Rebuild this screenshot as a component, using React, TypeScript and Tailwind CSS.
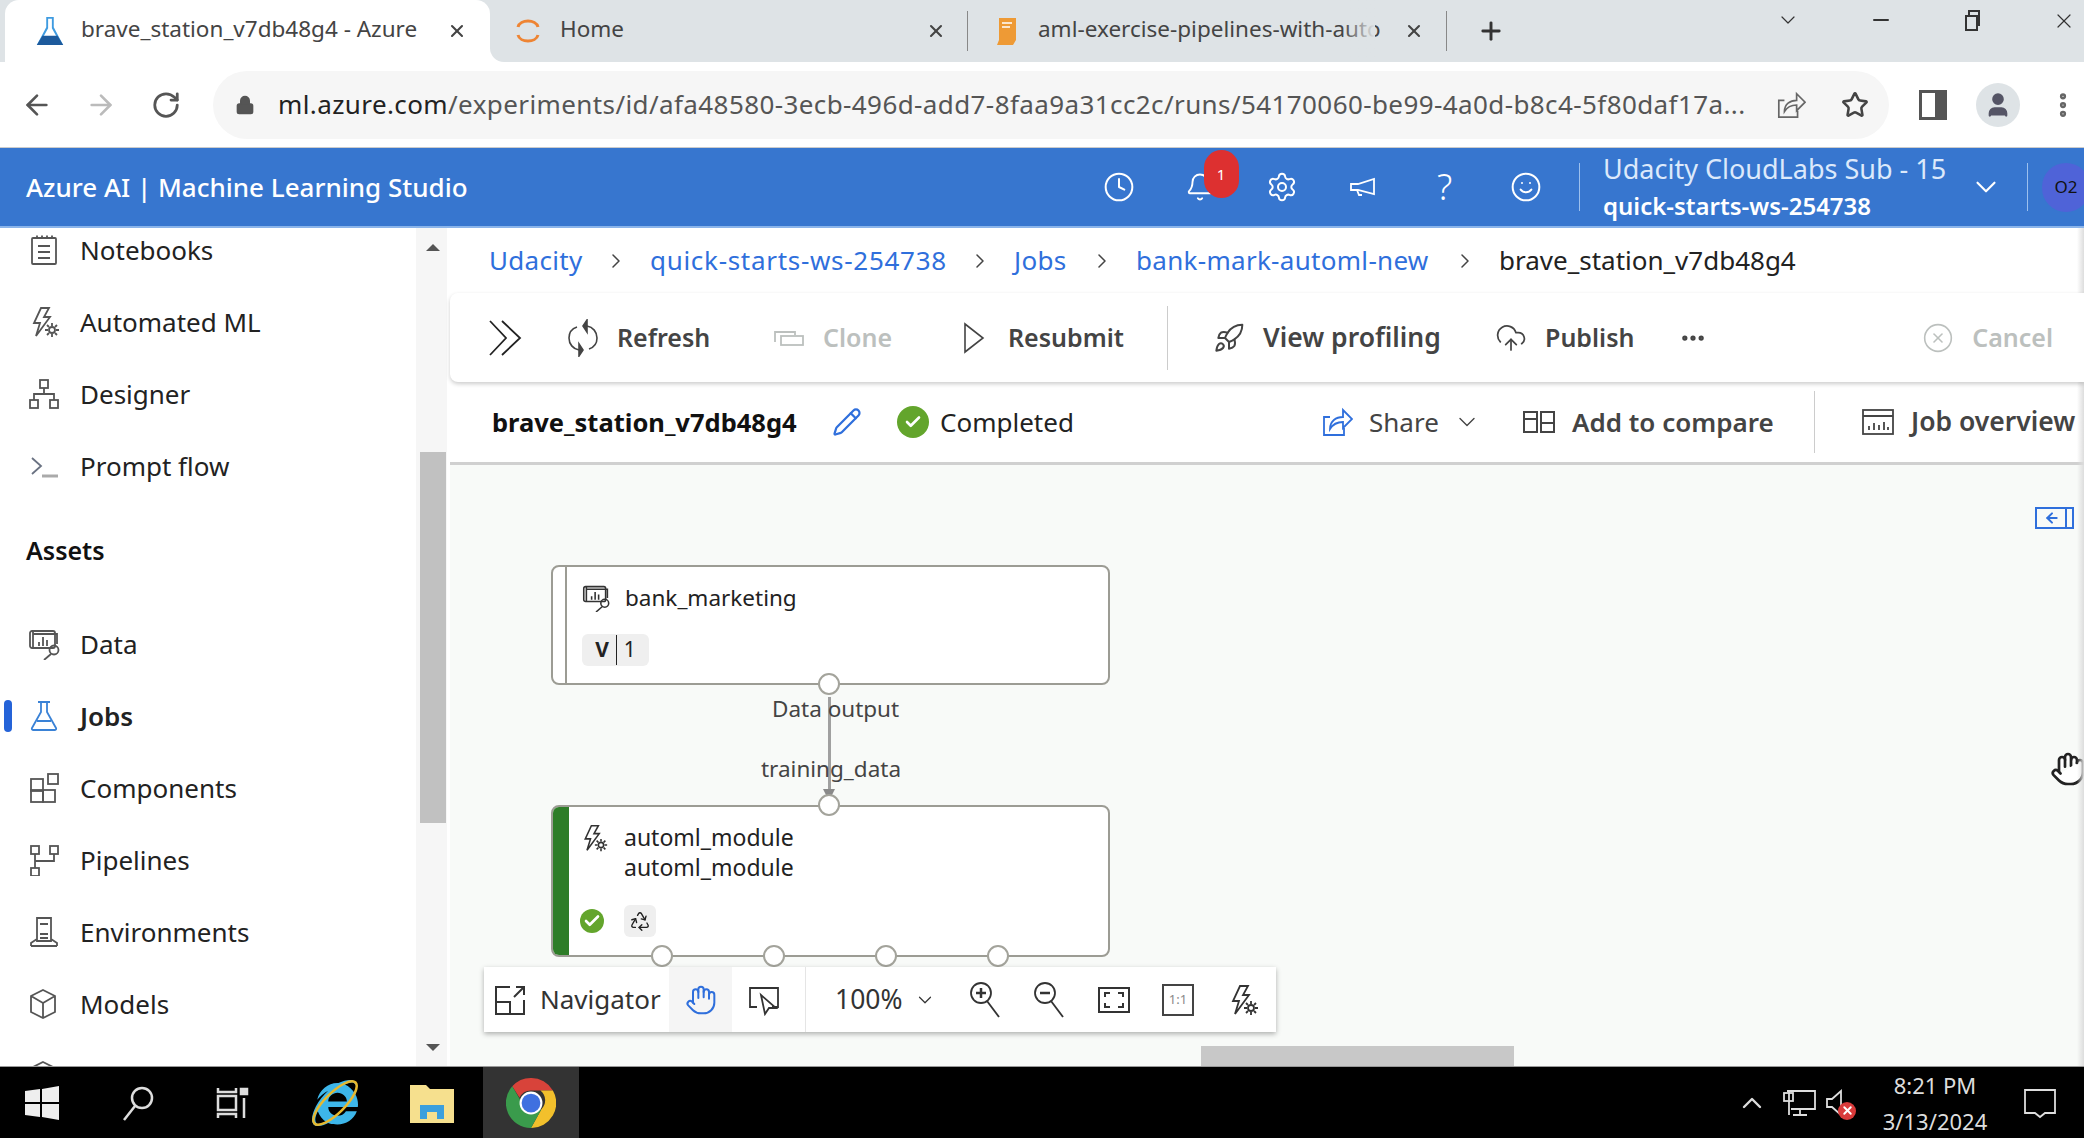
import type { ReactNode } from "react";
import {
  ArrowLeft,
  ArrowRight,
  Bell,
  ChevronDown,
  ChevronRight,
  ChevronUp,
  Clock,
  CloudUpload,
  Ellipsis,
  Hand,
  Lock,
  Minus,
  Pencil,
  Plus,
  Rocket,
  RotateCw,
  Settings,
  Smile,
  Star,
  User,
  X,
  Recycle,
  CircleX,
  Check,
} from "lucide-react";
import { FaInternetExplorer } from "react-icons/fa";

function Ico({ children, className = "w-8 h-8" }: { children: ReactNode; className?: string }) {
  return (
    <svg viewBox="0 0 32 32" fill="none" stroke="currentColor" strokeWidth="1.8" className={className}>
      {children}
    </svg>
  );
}

const NotebookIcon = () => (
  <Ico>
    <rect x="4" y="4" width="24" height="26" rx="1" />
    <path d="M9 1.5v3M14 1.5v3M19 1.5v3M24 1.5v3M10 12h12M10 18h12M10 24h12" />
  </Ico>
);
const BoltGear = ({ className }: { className?: string }) => (
  <Ico className={className}>
    <path d="M13 2h8l-5 9h6L8 30l4-13H6z" />
    <circle cx="24" cy="24" r="3" />
    <path d="M24 17v3M24 28v3M17 24h3M28 24h3M19 19l2 2M27 27l2 2M29 19l-2 2M21 27l-2 2" />
  </Ico>
);
const DesignerIcon = () => (
  <Ico>
    <rect x="12" y="2" width="8" height="8" />
    <rect x="2" y="22" width="8" height="8" />
    <rect x="22" y="22" width="8" height="8" />
    <path d="M16 10v6M6 22v-6h20v6" />
  </Ico>
);
const PromptIcon = () => (
  <Ico>
    <path d="M4 8l9 8-9 8" className="text-gray-500" />
    <path d="M14 26h16" strokeWidth="3" stroke="#aaa" />
  </Ico>
);
const DataIcon = ({ className }: { className?: string }) => (
  <Ico className={className}>
    <rect x="2" y="3" width="25" height="17" rx="2" />
    <path d="M5 6h24v10M5 3v17" />
    <path d="M11 18v-4M15 18V9M19 18v-6" />
    <circle cx="26" cy="22" r="4.5" />
    <path d="M23 26l-7 6" />
  </Ico>
);
const FlaskIcon = ({ className }: { className?: string }) => (
  <Ico className={className}>
    <path d="M10 2h12M13 2v10L4 28c-.5 1 0 2 1 2h22c1 0 1.500-1 1-2L19 12V2M9 21h14" />
  </Ico>
);
const ComponentsIcon = () => (
  <Ico>
    <rect x="3" y="7" width="12" height="12" />
    <rect x="15" y="19" width="12" height="12" transform="translate(0 -1)" />
    <rect x="3" y="18" width="12" height="12" />
    <rect x="20" y="2" width="10" height="10" />
  </Ico>
);
const PipelinesIcon = () => (
  <Ico>
    <rect x="3" y="2" width="8" height="8" />
    <rect x="22" y="2" width="8" height="8" />
    <rect x="3" y="24" width="8" height="8" />
    <path d="M7 10v14M7 17h19v-7" />
  </Ico>
);
const EnvIcon = () => (
  <Ico>
    <path d="M9 2h14v23H9zM3 30v-3l6-4M29 30v-3l-6-4M3 30h26M12 18h8M12 22h8M12 8h8" />
  </Ico>
);
const ModelIcon = () => (
  <Ico>
    <path d="M15 2l12 6v16l-12 6-12-6V8zM3 8l12 7 12-7M15 15v15" />
  </Ico>
);
const ShareBoxIcon = ({ className }: { className?: string }) => (
  <svg viewBox="0 0 32 32" fill="none" stroke="currentColor" strokeWidth="1.8" className={className}>
    <path d="M9 11H3v18h20v-7" />
    <path d="M9 23c0-8 6-12 13-12V4l9 9-9 9v-6c-6 0-10 2-13 7z" />
  </svg>
);
const MagnifierIcon = ({ minus }: { minus?: boolean }) => (
  <svg viewBox="0 0 32 38" fill="none" stroke="currentColor" strokeWidth="1.800" className="h-[38px] w-8">
    <circle cx="12" cy="12" r="10" />
    <path d={minus ? "M7 12h10" : "M7 12h10M12 7v10"} strokeWidth="2.500" />
    <path d="M18 20l12 16" />
  </svg>
);

function NavItem({ icon, label, active }: { icon: ReactNode; label: string; active?: boolean }) {
  return (
    <div className="relative flex h-[72px] shrink-0 items-center">
      {active && <div className="absolute left-1 top-[20px] h-8 w-2 rounded bg-[#2563d8]" />}
      <div className={`ml-[28px] flex w-8 justify-center ${active ? "text-[#3a82d6]" : "text-[#555]"}`}>{icon}</div>
      <span className={`ml-[20px] text-[26px] text-[#222] ${active ? "font-semibold" : ""}`}>{label}</span>
    </div>
  );
}

function Sidebar() {
  return (
    <div className="relative h-full w-[450px] shrink-0 overflow-hidden bg-white">
      <div className="-mt-[14px] flex w-[416px] flex-col">
        <NavItem icon={<NotebookIcon />} label="Notebooks" />
        <NavItem icon={<BoltGear />} label="Automated ML" />
        <NavItem icon={<DesignerIcon />} label="Designer" />
        <NavItem icon={<PromptIcon />} label="Prompt flow" />
        <div className="mt-[13px] mb-[21px] flex h-[72px] items-center pl-[26px] text-[25px] font-semibold text-[#111]">Assets</div>
        <NavItem icon={<DataIcon />} label="Data" />
        <NavItem icon={<FlaskIcon />} label="Jobs" active />
        <NavItem icon={<ComponentsIcon />} label="Components" />
        <NavItem icon={<PipelinesIcon />} label="Pipelines" />
        <NavItem icon={<EnvIcon />} label="Environments" />
        <NavItem icon={<ModelIcon />} label="Models" />
        <NavItem icon={<ModelIcon />} label="" />
      </div>
      {/* scrollbar */}
      <div className="absolute bottom-0 left-[416px] top-0 w-[31px] bg-[#f6f6f6]">
        <div className="absolute left-[10px] top-[16px] h-0 w-0 border-x-[7px] border-b-[7px] border-x-transparent border-b-[#555]" />
        <div className="absolute left-[4px] top-[224px] h-[371px] w-[26px] bg-[#c1c1c1]" />
        <div className="absolute bottom-[15px] left-[10px] h-0 w-0 border-x-[7px] border-t-[7px] border-x-transparent border-t-[#555]" />
      </div>
    </div>
  );
}

function FlaskFav() {
  return (
    <svg viewBox="0 0 30 34" className="h-8 w-[30px] shrink-0">
      <path d="M11 2h8v11l10 19H1l10-19z" fill="#3f9be0" />
      <path d="M13 4h4v10l5 9H8l5-9z" fill="#fff" />
      <path d="M7 22h16l6 10H1z" fill="#1d5a9c" />
    </svg>
  );
}

function TabBar() {
  return (
    <div className="flex h-[62px] shrink-0 items-center bg-[#dee3e6] text-[22.500px] text-[#444]">
      <div className="relative ml-[5px] flex h-full w-[485px] shrink-0 items-center rounded-t-[14px] bg-white pl-[30px]">
        <FlaskFav />
        <span className="ml-4 -mt-[4px] w-[340px] shrink-0 whitespace-nowrap">brave_station_v7db48g4 - Azure</span>
        <X size={20} strokeWidth={2.5} className="ml-[26px] shrink-0" />
        <div className="absolute -right-[14px] bottom-0 h-[14px] w-[14px] bg-white">
          <div className="h-full w-full rounded-bl-[14px] bg-[#dee3e6]" />
        </div>
      </div>
      <div className="flex h-full w-[477px] shrink-0 items-center pl-[24px]">
        <svg viewBox="0 0 28 32" className="h-8 w-7" fill="none" stroke="#ee8433" strokeWidth="3">
          <path d="M4 12C6 4 22 4 24 12" />
          <path d="M4 20C6 28 22 28 24 20" />
        </svg>
        <span className="ml-[18px] -mt-[4px] flex-1">Home</span>
        <X size={20} strokeWidth={2.5} className="mr-[21px]" />
      </div>
      <div className="h-[40px] w-px shrink-0 bg-[#888]" />
      <div className="relative flex h-full w-[478px] shrink-0 items-center pl-[24px]">
        <svg viewBox="0 0 28 32" className="h-8 w-7 shrink-0">
          <path d="M7 3h17v22l-3 5H5l2-5z" fill="#ee9a35" />
          <path d="M10 8h10M10 12h8" stroke="#fff" strokeWidth="1.500" />
        </svg>
        <span className="ml-[18px] -mt-[4px] w-[350px] shrink-0 whitespace-nowrap">aml-exercise-pipelines-with-auto</span>
        <div className="absolute left-[375px] top-0 h-full w-[32px] bg-gradient-to-r from-[#dee3e6]/0 to-[#dee3e6]" />
        <X size={20} strokeWidth={2.5} className="ml-[16px] shrink-0" />
      </div>
      <div className="h-[40px] w-px shrink-0 bg-[#888]" />
      <Plus size={28} strokeWidth={2.5} className="ml-[30px] text-[#333]" />
      <div className="ml-auto flex h-full items-start pt-[8px] text-[#333]">
        <div className="mr-[69px] flex w-6 justify-center"><ChevronDown size={24} strokeWidth={1.2} /></div>
        <div className="mr-[67px] flex w-6 justify-center"><Minus size={24} strokeWidth={2} /></div>
        <div className="mr-[68px] flex w-6 justify-center">
          <svg viewBox="0 0 24 24" className="h-6 w-6" fill="none" stroke="currentColor" strokeWidth="2">
            <rect x="6" y="8" width="11" height="14" />
            <path d="M9 8V3h10v14h-2" />
          </svg>
        </div>
        <div className="mr-[8px] flex w-6 justify-center"><X size={26} strokeWidth={1.2} /></div>
      </div>
    </div>
  );
}

function AddressBar() {
  return (
    <div className="flex h-[86px] shrink-0 items-center border-b border-[#ccc] bg-white">
      <div className="ml-[5px] flex w-[64px] justify-center"><ArrowLeft size={32} strokeWidth={2} className="text-[#555]" /></div>
      <div className="flex w-[64px] justify-center"><ArrowRight size={32} strokeWidth={2} className="text-[#bbb]" /></div>
      <div className="flex w-[66px] justify-center"><RotateCw size={30} strokeWidth={2.2} className="text-[#555]" /></div>
      <div className="ml-[14px] flex h-[68px] w-[1676px] shrink-0 items-center rounded-full bg-[#f6f6f6] pl-[22px]">
        <Lock size={20} fill="#555" className="shrink-0 text-[#555]" />
        <span className="ml-[23px] w-[1475px] shrink-0 overflow-hidden whitespace-nowrap text-[26px] tracking-[0.4px] text-[#555]">
          <span className="text-[#222]">ml.azure.com</span>/experiments/id/afa48580-3ecb-496d-add7-8faa9a31cc2c/runs/54170060-be99-4a0d-b8c4-5f80daf17a...
        </span>
        <ShareBoxIcon className="ml-[23px] h-[30px] w-[30px] shrink-0 text-[#666]" />
        <Star size={28} strokeWidth={2.2} className="ml-[35px] shrink-0 text-[#444]" />
      </div>
      <div className="ml-[28px] flex w-[32px] justify-center">
        <div className="h-[30px] w-[28px] border-[3px] border-r-[12px] border-[#555]" />
      </div>
      <div className="ml-[27px] flex h-[44px] w-[44px] items-center justify-center rounded-full bg-[#dee3e6]">
        <User size={28} fill="#556" className="text-[#556]" />
      </div>
      <div className="ml-[23px] flex w-[40px] justify-center"><Ellipsis size={30} strokeWidth={3} className="rotate-90 text-[#666]" /></div>
    </div>
  );
}

function AzureHeader() {
  const iconBox = "flex w-[81.5px] shrink-0 justify-center";
  return (
    <div className="relative flex h-[80px] shrink-0 items-center border-b-2 border-[#8ab4ea] bg-[#3776cf] text-white">
      <div className="min-w-0 flex-1 whitespace-nowrap pl-[26px] text-[26px] font-medium">Azure AI | Machine Learning Studio</div>
      <div className={iconBox}><Clock size={32} strokeWidth={1.5} /></div>
      <div className={`${iconBox} relative`}>
        <Bell size={30} strokeWidth={1.5} />
        <div className="absolute left-[44px] -top-[22px] flex h-[48px] w-[35px] items-center justify-center rounded-full bg-[#dd3030] text-[15px]">1</div>
      </div>
      <div className={iconBox}><Settings size={32} strokeWidth={1.5} /></div>
      <div className={iconBox}>
        <svg viewBox="0 0 32 32" className="h-8 w-8" fill="none" stroke="currentColor" strokeWidth="1.800">
          <path d="M4 13h7l16-5v15l-16-4H4zM10 19l2 5h3" />
        </svg>
      </div>
      <div className={`${iconBox} text-[36px] font-light leading-none`}>?</div>
      <div className={iconBox}><Smile size={32} strokeWidth={1.5} /></div>
      <div className="ml-3 h-[48px] w-px shrink-0 bg-[#9cc0ee]" />
      <div className="ml-[23px] flex w-[360px] shrink-0 flex-col">
        <span className="whitespace-nowrap text-[27px] leading-[38px] text-[#dce9fb]">Udacity CloudLabs Sub - 15</span>
        <span className="whitespace-nowrap text-[24px] font-semibold leading-[36px]">quick-starts-ws-254738</span>
      </div>
      <div className="flex w-[46px] shrink-0 justify-center"><ChevronDown size={34} strokeWidth={1.5} /></div>
      <div className="ml-[18px] h-[48px] w-px shrink-0 bg-[#9cc0ee]" />
      <div className="ml-[14px] -mr-[6px] flex h-[49px] w-[48px] shrink-0 items-center justify-center rounded-full bg-[#4f63d8] text-[17px] text-[#111]">O2</div>
    </div>
  );
}

function Breadcrumb() {
  const crumbs = [
    { label: "Udacity", width: "w-[93px]" },
    { label: "quick-starts-ws-254738", width: "w-[296px] tracking-[0.7px]" },
    { label: "Jobs", width: "w-[54px]" },
    { label: "bank-mark-automl-new", width: "w-[295px]" },
  ];
  return (
    <div className="flex h-[65px] shrink-0 items-center bg-white pl-[39px] text-[26px] tracking-[0.3px]">
      {crumbs.map((c) => (
        <div key={c.label} className="flex items-center">
          <span className={`whitespace-nowrap text-[#2f6fdc] ${c.width}`}>{c.label}</span>
          <div className="flex w-[68px] justify-center"><ChevronRight size={24} strokeWidth={1.5} className="text-[#444]" /></div>
        </div>
      ))}
      <span className="whitespace-nowrap tracking-normal text-[#222]">brave_station_v7db48g4</span>
    </div>
  );
}

function ToolBtn({ icon, label, width, disabled, text = "text-[25px]" }: { icon: ReactNode; label: string; width: string; disabled?: boolean; text?: string }) {
  return (
    <div className={`flex shrink-0 items-center ${width} ${disabled ? "text-[#bcc0be]" : "text-[#444]"}`}>
      <div className="flex w-[34px] shrink-0 justify-center">{icon}</div>
      <span className={`ml-[17px] whitespace-nowrap font-semibold ${text}`}>{label}</span>
    </div>
  );
}

function Toolbar() {
  return (
    <div className="z-10 flex h-[89px] shrink-0 items-center rounded-l-lg bg-white pl-[38px] pr-[31px] shadow-[0_2px_4px_rgba(0,0,0,0.2)]">
      <div className="mr-[44px] flex w-[34px] justify-center text-[#222]">
        <svg viewBox="0 0 34 38" className="h-[38px] w-[34px]" fill="none" stroke="currentColor" strokeWidth="1.800">
          <path d="M2 2l16 17L2 36M14 2l18 17-18 17" />
        </svg>
      </div>
      <ToolBtn width="w-[206px]" label="Refresh" icon={
        <svg viewBox="0 0 32 38" className="h-[38px] w-8" fill="none" stroke="currentColor" strokeWidth="1.600">
          <path d="M10 8C4 10 2 15 2 19c0 6 4 11 10 12M22 30c6-2 8-7 8-11 0-6-4-11-10-12" />
          <path d="M20 1v12l-4-6zM12 25v12l4-6z" fill="currentColor" />
        </svg>
      } />
      <ToolBtn width="w-[185px]" label="Clone" disabled icon={
        <svg viewBox="0 0 32 32" className="h-8 w-8" fill="none" stroke="currentColor" strokeWidth="1.800"><path d="M2 20V10h20v3" /><rect x="8" y="14" width="22" height="9" /></svg>
      } />
      <ToolBtn width="w-[210px]" label="Resubmit" icon={
        <svg viewBox="0 0 24 32" className="h-8 w-6" fill="none" stroke="currentColor" strokeWidth="1.600"><path d="M3 2l18 14L3 30z" /></svg>
      } />
      <div className="h-[64px] w-px shrink-0 bg-[#ccc]" />
      <div className="ml-[44px]"><ToolBtn width="w-[282px]" label="View profiling" text="text-[26.500px]" icon={<Rocket size={32} strokeWidth={1.5} />} /></div>
      <ToolBtn width="w-[182px]" label="Publish" icon={<CloudUpload size={32} strokeWidth={1.3} />} />
      <div className="flex w-[34px] justify-center text-[#444]"><Ellipsis size={28} strokeWidth={2.500} /></div>
      <div className="ml-auto flex items-center text-[#bcc0be]">
        <CircleX size={32} strokeWidth={1.2} />
        <span className="ml-[18px] text-[25px] font-semibold">Cancel</span>
      </div>
    </div>
  );
}

function CheckBadge({ size }: { size: string }) {
  return (
    <div className={`flex shrink-0 items-center justify-center rounded-full bg-[#63a52c] text-white ${size}`}>
      <Check size={18} strokeWidth={3.5} />
    </div>
  );
}

function JobRow() {
  return (
    <div className="flex h-[83px] shrink-0 items-center border-b-[3px] border-[#d0d0d0] bg-white pl-[42px]">
      <div className="w-[340px] shrink-0 whitespace-nowrap text-[25.500px] font-bold text-[#111]">brave_station_v7db48g4</div>
      <Pencil size={30} strokeWidth={1.800} className="shrink-0 text-[#2f6fdc]" />
      <div className="ml-[35px]"><CheckBadge size="h-8 w-8" /></div>
      <span className="ml-[11px] whitespace-nowrap text-[26px] text-[#222]">Completed</span>
      <div className="ml-auto flex shrink-0 items-center text-[#444]">
        <div className="flex w-[202px] shrink-0 items-center">
          <ShareBoxIcon className="h-8 w-8 text-[#2f6fdc]" />
          <span className="ml-4 text-[26px]">Share</span>
          <ChevronDown size={28} strokeWidth={1.2} className="ml-[14px]" />
        </div>
        <div className="flex w-[291px] shrink-0 items-center">
          <svg viewBox="0 0 32 24" className="h-6 w-8" fill="none" stroke="currentColor" strokeWidth="2"><rect x="1" y="2" width="13" height="20" /><rect x="18" y="2" width="13" height="20" /><path d="M1 9h13M18 13h13" /></svg>
          <span className="ml-[17px] whitespace-nowrap text-[26px] font-semibold">Add to compare</span>
        </div>
        <div className="h-[62px] w-px shrink-0 bg-[#ccc]" />
        <div className="ml-[47px] flex w-[222px] shrink-0 items-center">
          <svg viewBox="0 0 32 28" className="h-7 w-8" fill="none" stroke="currentColor" strokeWidth="1.800"><rect x="1" y="2" width="30" height="24" /><path d="M1 8h30M7 22v-4M12 22v-7M17 22v-5M22 22v-8M26 22v-3" /></svg>
          <span className="ml-[17px] whitespace-nowrap text-[26.500px] font-semibold">Job overview</span>
        </div>
      </div>
    </div>
  );
}

function Port({ left, top }: { left: string; top: string }) {
  return <div className={`absolute h-[22px] w-[22px] rounded-full border-2 border-[#a3a39b] bg-white ${left} ${top}`} />;
}

function Canvas() {
  return (
    <div className="relative min-h-0 flex-1 overflow-hidden bg-[#f8faf8] text-[#222]">
      {/* side panel toggle */}
      <div className="absolute left-[1585px] top-[42px] flex h-[22px] w-[39px] items-center border-2 border-[#2f6fdc] text-[#2f6fdc]">
        <ArrowLeft size={16} strokeWidth={3} className="ml-[7px]" />
        <div className="ml-[5px] h-full w-[2px] bg-[#2f6fdc]" />
      </div>
      <Hand size={36} strokeWidth={1.8} fill="#fff" className="absolute left-[1600px] top-[286px] text-[#222]" />

      {/* dataset node */}
      <div className="absolute left-[101px] top-[100px] flex h-[120px] w-[559px] rounded-lg border-2 border-[#9c9c94] bg-white">
        <div className="w-[14px] shrink-0 border-r-2 border-[#9c9c94]" />
        <div className="flex flex-col pl-[15px] pt-[15px]">
          <div className="flex items-center">
            <DataIcon className="h-7 w-7 text-[#333]" />
            <span className="ml-[15px] text-[22.500px] leading-8">bank_marketing</span>
          </div>
          <div className="mt-[20px] flex h-[32px] w-[67px] items-center justify-center rounded-md bg-[#efefef] text-[21px]">
            <span className="font-bold">V</span>
            <span className="mx-[7px] h-[30px] w-px bg-[#222]" />
            <span>1</span>
          </div>
        </div>
      </div>

      {/* connector */}
      <div className="absolute left-[378px] top-[232px] h-[98px] w-[3px] bg-[#a0a0a0]" />
      <div className="absolute left-[373px] top-[324px] h-0 w-0 border-x-[6.500px] border-t-[12px] border-x-transparent border-t-[#8a8a8a]" />
      <Port left="left-[368px]" top="top-[208px]" />
      <span className="absolute left-[322px] top-[229px] whitespace-nowrap text-[22.500px] leading-[30px] text-[#444]">Data output</span>
      <span className="absolute left-[311px] top-[289px] whitespace-nowrap text-[22.500px] leading-[30px] text-[#444]">training_data</span>

      {/* automl node */}
      <div className="absolute left-[101px] top-[340px] flex h-[152px] w-[559px] overflow-hidden rounded-lg border-2 border-[#9c9c94] bg-white">
        <div className="w-[16px] shrink-0 bg-[#2e7d28]" />
        <div className="flex flex-col pl-[11px] pt-[15px]">
          <div className="flex">
            <BoltGear className="h-8 w-7 text-[#333]" />
            <div className="ml-[16px] flex flex-col text-[23px] leading-[30px]">
              <span>automl_module</span>
              <span>automl_module</span>
            </div>
          </div>
          <div className="mt-[23px] flex items-center">
            <CheckBadge size="h-6 w-6" />
            <div className="ml-[20px] flex h-8 w-8 items-center justify-center rounded-md bg-[#efefef]"><Recycle size={22} strokeWidth={1.5} /></div>
          </div>
        </div>
      </div>
      <Port left="left-[368px]" top="top-[329px]" />
      <Port left="left-[201px]" top="top-[480px]" />
      <Port left="left-[313px]" top="top-[480px]" />
      <Port left="left-[425px]" top="top-[480px]" />
      <Port left="left-[537px]" top="top-[480px]" />

      {/* floating controls */}
      <div className="absolute left-[34px] top-[502px] flex h-[65px] w-[792px] items-center bg-white pl-[10px] text-[#333] shadow-[0_2px_5px_rgba(0,0,0,0.3)]">
        <svg viewBox="0 0 32 32" className="h-8 w-8 shrink-0" fill="none" stroke="currentColor" strokeWidth="2"><path d="M16 3H2v27h28V16M2 18h14v12M20 13L30 3M22 3h8v8" /></svg>
        <span className="ml-[14px] w-[129px] shrink-0 text-[26px]">Navigator</span>
        <div className="flex h-full w-[63px] shrink-0 items-center justify-center bg-[#f5f5f5]"><Hand size={32} strokeWidth={1.5} className="text-[#2f6fdc]" /></div>
        <div className="flex w-[73px] shrink-0 justify-start pl-4">
          <svg viewBox="0 0 32 32" className="h-8 w-8" fill="none" stroke="currentColor" strokeWidth="1.800"><path d="M9 23H2V4h28v19h-6M13 11l4 19 4-6 7 0z" /></svg>
        </div>
        <div className="h-full w-px shrink-0 bg-[#e5e5e5]" />
        <span className="ml-[29px] w-[72px] shrink-0 whitespace-nowrap text-[26.500px]">100%</span>
        <ChevronDown size={22} strokeWidth={1.3} className="ml-[7px] shrink-0" />
        <div className="ml-[33px] shrink-0"><MagnifierIcon /></div>
        <div className="ml-[32px] shrink-0"><MagnifierIcon minus /></div>
        <svg viewBox="0 0 32 32" className="ml-[33px] h-8 w-8 shrink-0" fill="none" stroke="currentColor" strokeWidth="2"><rect x="1" y="4" width="30" height="24" /><path d="M7 13V9h5M20 9h5v4M25 19v4h-5M12 23H7v-4" /></svg>
        <div className="ml-[32px] flex h-[32px] w-[32px] shrink-0 items-center justify-center border-2 border-[#444] text-[13px] text-[#888]">1:1</div>
        <div className="ml-[33px] shrink-0"><BoltGear /></div>
      </div>

      {/* horizontal scrollbar */}
      <div className="absolute bottom-0 left-[751px] h-[20px] w-[313px] bg-[#c8c8c8]" />
    </div>
  );
}

function Taskbar() {
  return (
    <div className="flex h-[72px] shrink-0 items-center border-t border-[#999] bg-black text-white">
      <svg viewBox="0 0 34 34" className="ml-[25px] h-[34px] w-[34px]" fill="#eee">
        <path d="M0 5l15-2v13H0zM17 3l17-3v16H17zM0 18h15v13L0 29zM17 18h17v16l-17-3z" />
      </svg>
      <svg viewBox="0 0 34 36" className="ml-[62px] h-9 w-[34px]" fill="none" stroke="#ddd" strokeWidth="2.500">
        <circle cx="21" cy="13" r="10" />
        <path d="M14 21L3 35" />
      </svg>
      <svg viewBox="0 0 34 34" className="ml-[60px] h-[34px] w-[34px]" fill="none" stroke="#ddd" strokeWidth="2.500">
        <path d="M3 2v4h18V2M3 32v-4h18v4M3 10h18v14H3zM29 12v20" />
        <rect x="26" y="3" width="6" height="5" fill="#ddd" />
      </svg>
      <div className="relative ml-[63px] flex h-[46px] w-[46px] items-center justify-center">
        <FaInternetExplorer size={46} className="text-[#3db6ea]" />
        <svg viewBox="0 0 46 46" className="absolute inset-0 h-[46px] w-[46px]" fill="none" stroke="#e8b92e" strokeWidth="2.500">
          <ellipse cx="23" cy="23" rx="29" ry="10" transform="rotate(-45 23 23)" />
        </svg>
      </div>
      <svg viewBox="0 0 44 40" className="ml-[52px] h-[40px] w-[44px]">
        <path d="M0 2h16l4 4h24v34H0z" fill="#f6e08e" />
        <path d="M10 36V22h24v14h-7v-7H17v7z" fill="#3b9fdd" />
      </svg>
      <div className="ml-[29px] flex h-full w-[96px] items-center justify-center bg-[#333]">
        <svg viewBox="0 0 48 48" className="h-[50px] w-[50px]">
          <path d="M24 0a24 24 0 0 1 21 12H24a12 12 0 0 0-11 7L6 8A24 24 0 0 1 24 0z" fill="#d8433a" />
          <path d="M45 12a24 24 0 0 1-21 36l10-18a12 12 0 0 0-1-18z" fill="#f2c02c" />
          <path d="M24 48A24 24 0 0 1 6 8l10 17a12 12 0 0 0 18 5z" fill="#3a9b4c" />
          <circle cx="24" cy="24" r="11" fill="#fff" />
          <circle cx="24" cy="24" r="9" fill="#3f70e0" />
        </svg>
      </div>
      <div className="ml-auto flex items-center">
        <ChevronUp size={32} strokeWidth={1.8} className="text-[#ddd]" />
        <svg viewBox="0 0 34 28" className="ml-[15px] h-[28px] w-[34px]" fill="none" stroke="#ddd" strokeWidth="1.800">
          <path d="M4 2h28v18H8M10 26h14M17 20v6M6 2v24" />
          <rect x="1" y="4" width="9" height="8" />
        </svg>
        <div className="relative ml-[8px] w-[30px]">
          <svg viewBox="0 0 20 28" className="h-[28px] w-[20px]" fill="none" stroke="#ddd" strokeWidth="1.800">
            <path d="M2 10h5l9-8v24l-9-8H2z" />
          </svg>
          <div className="absolute -bottom-[3px] left-[13px] flex h-[18px] w-[18px] items-center justify-center rounded-full bg-[#d93a3a]">
            <X size={13} strokeWidth={3.5} />
          </div>
        </div>
        <div className="ml-[17px] flex w-[126px] flex-col items-center text-[22px] leading-[36px] text-[#ddd]">
          <span className="whitespace-nowrap">8:21 PM</span>
          <span className="whitespace-nowrap">3/13/2024</span>
        </div>
        <svg viewBox="0 0 32 32" className="ml-[26px] mr-[28px] h-8 w-8" fill="none" stroke="#ddd" strokeWidth="1.800">
          <path d="M1 3h30v23H21l-5 4-5-4H1z" />
        </svg>
      </div>
    </div>
  );
}

export default function App() {
  return (
    <div className="flex h-screen w-screen flex-col overflow-hidden bg-white font-['Noto_Sans',sans-serif]">
      <TabBar />
      <AddressBar />
      <AzureHeader />
      <div className="relative flex min-h-0 flex-1">
        <Sidebar />
        <div className="flex min-w-0 flex-1 flex-col">
          <Breadcrumb />
          <Toolbar />
          <JobRow />
          <Canvas />
        </div>
        <div className="absolute bottom-0 right-0 top-0 w-[7px] bg-gradient-to-r from-transparent to-[#ddd]" />
      </div>
      <Taskbar />
    </div>
  );
}
